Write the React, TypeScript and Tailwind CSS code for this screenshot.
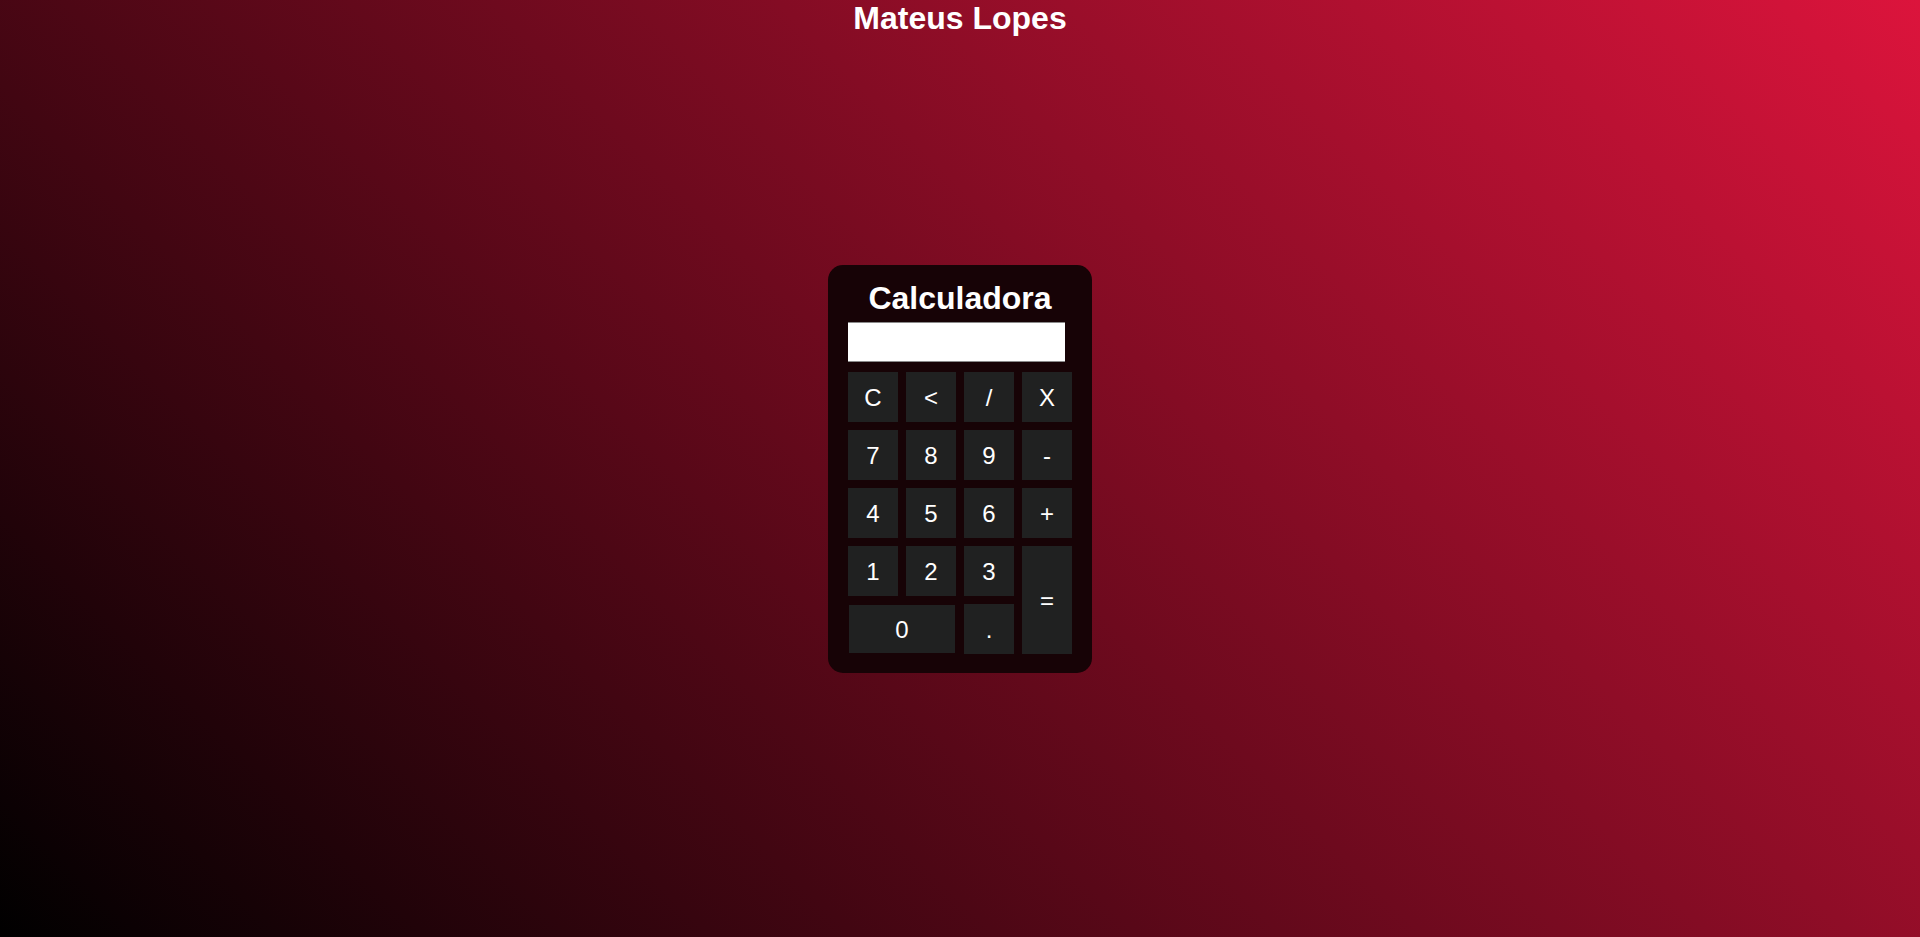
const keys = [
  { label: "C" },
  { label: "<" },
  { label: "/" },
  { label: "X" },
  { label: "7" },
  { label: "8" },
  { label: "9" },
  { label: "-" },
  { label: "4" },
  { label: "5" },
  { label: "6" },
  { label: "+" },
  { label: "1" },
  { label: "2" },
  { label: "3" },
  { label: "=", span: "row-span-2" },
  { label: "0", span: "col-span-2 m-px" },
  { label: "." },
];

const App = () => {
  return (
    <div
      className="w-full h-screen grid grid-rows-[37px_1fr_37px] bg-[linear-gradient(45deg,#000000,#dc143c)] text-white"
      style={{ fontFamily: '"Liberation Sans", Arial, sans-serif' }}
    >
      {/* Header */}
      <h1 className="text-[32px] font-bold leading-[37px] text-center">Mateus Lopes</h1>

      {/* Calculator */}
      <div className="flex items-center justify-center">
        <div className="w-[264px] bg-[#170306] rounded-[15px] pt-5 px-5 pb-[19px] flex flex-col">
          <h1 className="text-[32px] font-bold leading-[27px] text-center mb-2.5">Calculadora</h1>
          <input
            type="text"
            readOnly
            className="w-[217px] h-[40px] bg-white border-t border-b border-[#8a8a8a] text-black text-2xl px-2 outline-none mb-2.5"
          />
          <div className="grid grid-cols-[repeat(4,50px)] grid-rows-[repeat(5,50px)] gap-2">
            {keys.map(({ label, span }) => (
              <button
                key={label}
                className={`${span ?? ""} bg-[#202121] text-white text-2xl pt-0.5 flex items-center justify-center`}
              >
                {label}
              </button>
            ))}
          </div>
        </div>
      </div>

      <div />
    </div>
  );
};

export default App;
